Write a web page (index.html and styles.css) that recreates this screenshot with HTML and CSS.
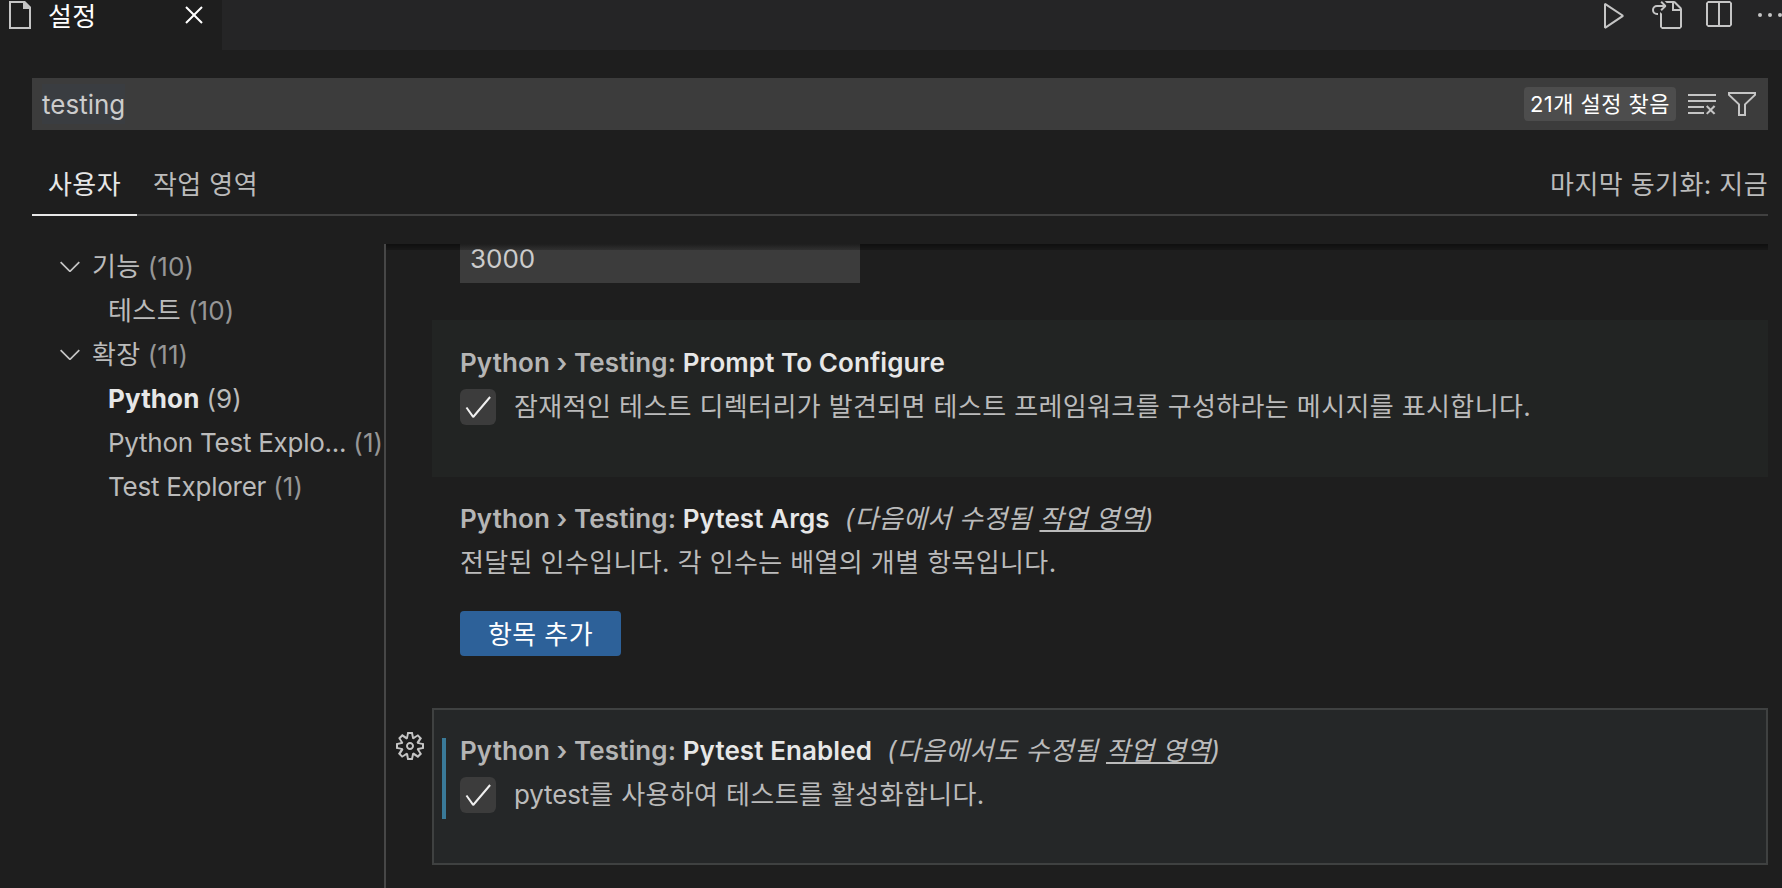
FILE: index.html
```html
<!DOCTYPE html>
<html lang="ko">
<head>
  <meta charset="UTF-8" />
  <meta name="viewport" content="width=device-width, initial-scale=1" />
  <title>설정</title>
  <link rel="stylesheet" href="styles.css">
</head>
<body>

  <header class="tabbar">
    <div class="tab">
      <svg class="file-icon" viewBox="0 0 22 28"><path d="M1 1h14l6 6v20H1z" fill="none" stroke="currentColor" stroke-width="2"/><path d="M14 0h2l6 6v2h-8z"/></svg>
      <span class="tab-name">설정</span>
      <svg class="icon close" viewBox="0 0 16 16"><path d="M8 8.707l3.646 3.647.708-.707L8.707 8l3.647-3.646-.707-.708L8 7.293 4.354 3.646l-.707.708L7.293 8l-3.646 3.646.707.708L8 8.707z"/></svg>
    </div>
    <div class="actions">
      <svg class="icon" viewBox="0 0 16 16"><path d="M3.78 2L3 2.41v12l.78.42 9-6V8l-9-6zM4 13.48V3.35l7.6 5.07L4 13.48z"/></svg>
      <svg class="icon" viewBox="0 0 16 16"><path fill-rule="evenodd" d="M6 5.914l2.06-2.06v-.708L5.915 1l-.707.707.043.043.25.25 1 1h-3a2.5 2.5 0 0 0 0 5H4V7h-.5a1.5 1.5 0 1 1 0-3h3L5.207 5.293 5.914 6 6 5.914zM11 2H8.328l-1-1H12l.71.29 3 3L16 5v9l-1 1H6l-1-1V6.5l1 .847V14h9V6h-4V2zm1 0v3h3l-3-3z"/></svg>
      <svg class="icon" viewBox="0 0 16 16"><path d="M14 1H3L2 2v11l1 1h11l1-1V2l-1-1zM8 13H3V2h5v11zm6 0H9V2h5v11z"/></svg>
      <svg class="icon" viewBox="0 0 16 16"><circle cx="3" cy="8" r="1"/><circle cx="8" cy="8" r="1"/><circle cx="13" cy="8" r="1"/></svg>
    </div>
  </header>

  <main class="settings">
    <div class="search">
      <span class="query">testing</span>
      <span class="count-badge">21개 설정 찾음</span>
      <svg class="icon" viewBox="0 0 16 16"><path d="M10 12.6l.7.7 1.6-1.6 1.6 1.6.8-.7L13 11l1.7-1.6-.8-.8-1.6 1.7-1.6-1.7-.7.8 1.6 1.6-1.6 1.6zM1 4h14V3H1v1zm0 3h14V6H1v1zm8 2.5V9H1v1h8v-.5zM9 13v-1H1v1h8z"/></svg>
      <svg class="icon filter" viewBox="0 0 16 16"><path d="M15 2v1.67l-5 4.759V14H6V8.429l-5-4.76V2h14zM7 8v5h2V8l5-4.76V3H2v.24L7 8z"/></svg>
    </div>

    <nav class="scopes">
      <span class="scope active">사용자</span>
      <span class="scope">작업 영역</span>
      <span class="sync">마지막 동기화: 지금</span>
    </nav>

    <div class="body">
      <aside class="toc">
        <div class="row">
          <svg class="icon" viewBox="0 0 16 16"><path d="M7.976 10.072l4.357-4.357.62.618L8.284 11h-.618L3 6.333l.619-.618 4.357 4.357z"/></svg>
          <span class="ko">기능</span><span class="num">(10)</span>
        </div>
        <div class="row child"><span class="ko">테스트</span><span class="num">(10)</span></div>
        <div class="row">
          <svg class="icon" viewBox="0 0 16 16"><path d="M7.976 10.072l4.357-4.357.62.618L8.284 11h-.618L3 6.333l.619-.618 4.357 4.357z"/></svg>
          <span class="ko">확장</span><span class="num">(11)</span>
        </div>
        <div class="row child selected"><span class="name">Python</span><span class="num">(9)</span></div>
        <div class="row child"><span>Python Test Explo...</span><span class="num">(1)</span></div>
        <div class="row child"><span>Test Explorer</span><span class="num">(1)</span></div>
      </aside>

      <section class="list">
        <div class="number-input">3000</div>

        <article class="item hovered">
          <h3 class="title"><span class="category">Python › Testing:</span> Prompt To Configure</h3>
          <div class="option">
            <span class="checkbox"><svg class="icon" viewBox="0 0 16 16"><path d="M14.431 3.323l-8.47 10-.79-.036-3.35-4.77.818-.574 2.978 4.24 8.051-9.506.764.646z"/></svg></span>
            <p class="desc">잠재적인 테스트 디렉터리가 발견되면 테스트 프레임워크를 구성하라는 메시지를 표시합니다.</p>
          </div>
        </article>

        <article class="item args">
          <h3 class="title"><span class="category">Python › Testing:</span> Pytest Args<em class="scope-note">(다음에서 수정됨 <u>작업 영역</u>)</em></h3>
          <p class="desc">전달된 인수입니다. 각 인수는 배열의 개별 항목입니다.</p>
          <button class="add">항목 추가</button>
        </article>

        <article class="item focused">
          <svg class="icon gear" viewBox="0 0 16 16"><path fill-rule="evenodd" d="M9.1 4.4L8.6 2H7.4l-.5 2.4-.7.3-2-1.3-.9.8 1.3 2-.2.7-2.4.5v1.2l2.4.5.3.8-1.3 2 .8.8 2-1.3.8.3.4 2.3h1.2l.5-2.4.8-.3 2 1.3.8-.8-1.3-2 .3-.8 2.3-.4V7.4l-2.4-.5-.3-.8 1.3-2-.8-.8-2 1.3-.7-.2zM9.4 1l.5 2.4L12 2.1l2 2-1.4 2.1 2.4.4v2.8l-2.4.5L14 12l-2 2-2.1-1.4-.5 2.4H6.6l-.5-2.4L4 13.9l-2-2 1.4-2.1L1 9.4V6.6l2.4-.5L2.1 4l2-2 2.1 1.4.4-2.4h2.8zm.6 7c0 1.1-.9 2-2 2s-2-.9-2-2 .9-2 2-2 2 .9 2 2zM8 9c.6 0 1-.4 1-1s-.4-1-1-1-1 .4-1 1 .4 1 1 1z"/></svg>
          <h3 class="title"><span class="category">Python › Testing:</span> Pytest Enabled<em class="scope-note">(다음에서도 수정됨 <u>작업 영역</u>)</em></h3>
          <div class="option">
            <span class="checkbox"><svg class="icon" viewBox="0 0 16 16"><path d="M14.431 3.323l-8.47 10-.79-.036-3.35-4.77.818-.574 2.978 4.24 8.051-9.506.764.646z"/></svg></span>
            <p class="desc"><span class="latin">pytest</span>를 사용하여 테스트를 활성화합니다.</p>
          </div>
        </article>
      </section>
    </div>
  </main>

</body>
</html>
```
FILE: styles.css
```css
* {
  box-sizing: border-box;
}
body {
  margin: 0;
  height: 888px;
  overflow: hidden;
  display: flex;
  flex-direction: column;
  background: #1e1e1e;
  color: #bbbbbb;
  font-family: Inter, "Noto Sans CJK KR", sans-serif;
  font-size: 26px;
  line-height: 44px;
  white-space: nowrap;
}
h3, p {
  margin: 0;
}
.icon {
  width: 32px;
  height: 32px;
  flex: none;
  display: block;
  fill: #c5c5c5;
}

/* tab bar */
.tabbar {
  display: flex;
  justify-content: space-between;
  height: 50px;
  flex: none;
  background: #252526;
}
.tab {
  display: flex;
  width: 222px;
  height: 50px;
  padding: 0 12px 20px 9px;
  align-items: center;
  background: #1e1e1e;
  color: #ffffff;
}
.file-icon {
  width: 22px;
  height: 28px;
  color: #c5c5c5;
  fill: #c5c5c5;
}
.tab-name {
  margin-left: 17px;
  padding-top: 3px;
  letter-spacing: 0.4px;
}
.close {
  margin-left: auto;
  fill: #ffffff;
}
.actions {
  display: flex;
  gap: 20px;
  margin: -1px -4px 0 0;
}

/* search box */
.settings {
  flex: 1;
  display: flex;
  flex-direction: column;
  min-height: 0;
  padding: 28px 14px 0 32px;
}
.search {
  display: flex;
  align-items: center;
  height: 52px;
  flex: none;
  padding: 0 10px;
  background: #3c3c3c;
}
.query {
  padding-top: 2px;
  line-height: 38px;
  background: #3a3d41;
  color: #cccccc;
}
.count-badge {
  margin-left: auto;
  margin-right: 10px;
  width: 152px;
  height: 34px;
  border-radius: 4px;
  background: #4d4d4d;
  color: #ffffff;
  font-size: 22px;
  line-height: 34px;
  letter-spacing: 0.45px;
  text-align: center;
}
.filter {
  margin-left: 8px;
}

/* user / workspace */
.scopes {
  display: flex;
  height: 86px;
  flex: none;
  padding-top: 24px;
  border-bottom: 2px solid #404040;
  line-height: 61px;
  letter-spacing: 0.4px;
}
.scope {
  height: 62px;
  padding: 0 16px;
}
.scope.active {
  border-bottom: 2px solid #e7e7e7;
  color: #e7e7e7;
}
.sync {
  margin-left: auto;
}

.body {
  flex: 1;
  display: flex;
  min-height: 0;
  margin-top: 28px;
}

/* table of contents */
.toc {
  width: 354px;
  flex: none;
  padding-left: 22px;
  border-right: 2px solid #474747;
  letter-spacing: -0.25px;
}
.row {
  display: flex;
  align-items: center;
  height: 44px;
}
.row span {
  padding-top: 1px;
}
.row .icon {
  margin-right: 6px;
}
.child {
  padding-left: 54px;
}
.ko {
  letter-spacing: 0.4px;
}
.num {
  margin-left: 7px;
  letter-spacing: 0.1px;
  color: #969696;
}
.selected {
  color: #e7e7e7;
}
.selected .name {
  font-weight: 700;
  letter-spacing: 0.1px;
}
.selected .num {
  color: #bbbbbb;
}

/* settings list */
.list {
  position: relative;
  flex: 1;
  padding-left: 46px;
}
.list::before {
  content: "";
  position: absolute;
  top: 0;
  left: 0;
  right: 0;
  height: 6px;
  background: linear-gradient(rgba(0, 0, 0, 0.5), rgba(0, 0, 0, 0.2));
}
.number-input {
  width: 400px;
  height: 39px;
  margin: 0 0 37px 28px;
  padding-left: 10px;
  background: #3c3c3c;
  color: #cccccc;
  line-height: 29px;
}
.item {
  position: relative;
  padding: 21px 28px 0;
}
.hovered {
  height: 157px;
  background: #222423;
}
.args {
  height: 231px;
  padding-top: 20px;
}
.focused {
  height: 157px;
  background: #252728;
  box-shadow: inset 0 0 0 2px #3f4141;
}
/* modified marker */
.focused::before {
  content: "";
  position: absolute;
  left: 10px;
  top: 30px;
  width: 4px;
  height: 81px;
  background: #3a7a99;
}
.gear {
  position: absolute;
  left: -38px;
  top: 22px;
}
.title {
  font-size: 26px;
  font-weight: 600;
  letter-spacing: 0.09px;
  color: #e7e7e7;
}
.category {
  color: #b5b5b5;
}
.scope-note {
  margin-left: 15px;
  font-weight: 400;
  letter-spacing: 0.32px;
  color: #bbbbbb;
}
.desc {
  letter-spacing: 0.38px;
}
.latin {
  letter-spacing: -0.15px;
}
.option {
  display: flex;
  align-items: center;
}
.checkbox {
  width: 36px;
  height: 36px;
  margin-right: 18px;
  padding: 2px;
  border-radius: 6px;
  background: #3c3c3c;
}
.checkbox .icon {
  fill: #f0f0f0;
}
.add {
  display: block;
  width: 161px;
  height: 45px;
  margin-top: 26px;
  padding: 2px 0 0;
  border: none;
  border-radius: 4px;
  background: #2d6199;
  color: #ffffff;
  font: inherit;
  letter-spacing: 0.4px;
  line-height: 43px;
}
```
